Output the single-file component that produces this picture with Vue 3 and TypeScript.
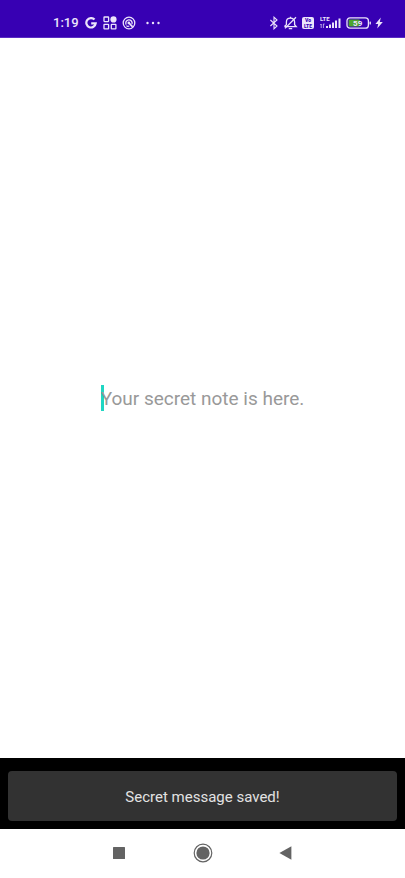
<script setup lang="ts">
import { ref } from 'vue'

const note = ref('')
const time = '1:19'
const battery = 59
const message = 'Secret message saved!'
</script>

<template>
  <div class="screen">
    <header class="status">
      <div class="group left">
        <span class="time">{{ time }}</span>
        <svg class="g" width="12" height="12" viewBox="0 0 12 12" aria-hidden="true">
          <path d="M9.5 2.6A4.7 4.7 0 1 0 10.7 6.4H6.2" fill="none" stroke="currentColor" stroke-width="2.2" />
        </svg>
        <svg class="apps" width="14" height="14" viewBox="0 0 14 14" aria-hidden="true">
          <g fill="none" stroke="currentColor" stroke-width="1.3">
            <rect x="1" y="1" width="4.6" height="4.6" rx=".5" />
            <rect x="1" y="8.3" width="4.6" height="4.6" rx=".5" />
            <rect x="8.3" y="8.3" width="4.6" height="4.6" rx=".5" />
          </g>
          <circle cx="10.5" cy="3.4" r="3.1" fill="currentColor" />
        </svg>
        <svg class="disc" width="14" height="14" viewBox="0 0 14 14" aria-hidden="true">
          <g fill="none" stroke="currentColor">
            <circle cx="7" cy="7" r="5.8" stroke-width="1.3" />
            <path d="M4.2 8.7A3.2 3.2 0 1 1 10 8" stroke-width="1.3" />
            <path d="M6.4 6.4L10.6 10.8" stroke-width="1.7" />
            <path d="M4.4 9.6C5.2 10.4 6.4 10.5 7.3 9.9" stroke-width="1.1" />
          </g>
          <circle cx="6.8" cy="6.9" r="1.3" fill="currentColor" />
        </svg>
        <svg class="more" width="14" height="4" viewBox="0 0 14 4" fill="currentColor" aria-hidden="true">
          <circle cx="1.5" cy="2" r="1.2" />
          <circle cx="7" cy="2" r="1.2" />
          <circle cx="12.5" cy="2" r="1.2" />
        </svg>
      </div>
      <div class="group right">
        <svg width="10" height="14" viewBox="0 0 10 14" aria-hidden="true">
          <path d="M1.4 4L8 10 5 12.8V1.2L8 4 1.4 10" fill="none" stroke="currentColor" stroke-width="1.1" />
        </svg>
        <svg width="15" height="14" viewBox="0 0 15 14" aria-hidden="true">
          <g fill="none" stroke="currentColor" stroke-width="1.3">
            <path d="M1.4 10.6H13.2L11.6 8.8V6C11.6 3.8 10 2.2 7.5 2.2S3.4 3.8 3.4 6V8.8L1.4 10.6" />
            <path d="M5.8 12.6H9.2M7.5 .8V2.2M2 12.4L13 1.2" />
          </g>
        </svg>
        <svg class="volte" width="12" height="12" viewBox="0 0 12 12" aria-hidden="true">
          <rect width="12" height="12" rx="2" fill="currentColor" />
          <text class="volte-text" x="6" y="5" text-anchor="middle">Vo</text>
          <text class="volte-text" x="6" y="11" text-anchor="middle">LTE</text>
        </svg>
        <svg class="signal" width="22" height="14" viewBox="0 0 22 14" aria-hidden="true">
          <text class="lte" x="0" y="5.4">LTE</text>
          <g fill="currentColor">
            <rect x="6" y="10" width="2" height="2" />
            <rect x="9" y="8.5" width="2" height="3.5" />
            <rect x="12" y="6.5" width="2" height="5.5" />
            <rect x="15" y="4.5" width="2" height="7.5" />
            <rect x="18.5" y="2.5" width="2" height="9.5" />
          </g>
          <path d="M1.2 12V8M.4 9L1.2 8M3.4 8V12M3.4 8H4.6" fill="none" stroke="currentColor" stroke-width=".7" />
        </svg>
        <svg class="battery" width="25" height="12" viewBox="0 0 25 12" aria-hidden="true">
          <rect x="2.6" y="2.4" :width="(19 * battery) / 100" height="7.2" rx="1" fill="#4ca52e" />
          <rect x="1" y=".8" width="21.4" height="10.4" rx="3" fill="none" stroke="currentColor" stroke-width="1.3" />
          <rect x="23.5" y="4.5" width="1.4" height="3" rx=".6" fill="currentColor" />
          <text class="level" x="11.7" y="8.9" text-anchor="middle">{{ battery }}</text>
        </svg>
        <svg class="bolt" width="8" height="12" viewBox="0 0 8 12" aria-hidden="true">
          <path d="M5.8 .6L.4 6.9H3.2L2.2 11.4 7.8 5H4.8Z" fill="currentColor" />
        </svg>
      </div>
    </header>

    <main class="content">
      <div class="field">
        <input v-model="note" class="note" type="text" aria-label="Secret note" placeholder="Your secret note is here." />
      </div>
    </main>

    <section class="snack-area">
      <div class="snackbar" role="status">{{ message }}</div>
    </section>

    <nav class="nav">
      <button type="button" aria-label="Recent apps">
        <svg width="20" height="20" viewBox="0 0 20 20"><rect x="4" y="4" width="12" height="12" rx=".5" fill="currentColor" /></svg>
      </button>
      <button type="button" aria-label="Home">
        <svg width="20" height="20" viewBox="0 0 20 20">
          <circle cx="10" cy="10" r="8.8" fill="none" stroke="currentColor" stroke-width="1.2" />
          <circle cx="10" cy="10" r="6.6" fill="currentColor" />
        </svg>
      </button>
      <button type="button" aria-label="Back">
        <svg width="20" height="20" viewBox="0 0 20 20"><path d="M2.4 10L14.4 3.2V16.8Z" fill="currentColor" /></svg>
      </button>
    </nav>
  </div>
</template>

<style>
body {
  margin: 0;
  background: #fff;
}
</style>

<style scoped>
.screen {
  display: flex;
  flex-direction: column;
  min-height: 100vh;
  font-family: Roboto, "Liberation Sans", sans-serif;
}
.status {
  display: flex;
  justify-content: space-between;
  align-items: center;
  box-sizing: border-box;
  height: 38px;
  padding: 9px 22px 0 53px;
  border-bottom: 1px solid #5a2cc4;
  background: #3700b3;
  color: #ece4fb;
}
.group {
  display: flex;
  align-items: center;
}
.left {
  gap: 6px;
}
.right {
  gap: 4px;
}
.signal {
  margin-left: 2px;
}
.time {
  font-size: 13px;
  line-height: 16px;
  font-weight: 500;
}
.disc {
  margin-left: -1px;
}
.more {
  margin-left: 4px;
}
.volte-text {
  font-size: 5px;
  font-weight: 900;
  fill: #3700b3;
}
.lte {
  font-size: 6px;
  font-weight: 700;
  fill: currentColor;
}
.level {
  font-size: 8px;
  font-weight: 700;
  fill: currentColor;
}
.content {
  flex: 1;
  display: flex;
  align-items: center;
  justify-content: center;
  background: #fff;
}
.field {
  position: relative;
  display: flex;
}
.field::before {
  content: "";
  position: absolute;
  top: 0;
  bottom: 0;
  left: 0;
  width: 3px;
  background: #1fd6c3;
}
.note {
  position: relative;
  field-sizing: content;
  box-sizing: border-box;
  max-width: 100%;
  height: 26px;
  padding: 1px 0 0;
  border: 0;
  outline: 0;
  background: transparent;
  color: #222;
  font: 400 19px/25px Roboto, "Liberation Sans", sans-serif;
}
.note::placeholder {
  color: #999;
  opacity: 1;
}
.snack-area {
  padding: 13px 8px 8px;
  background: #000;
}
.snackbar {
  padding: 16px 16px 14px;
  border-radius: 4px;
  background: #323232;
  color: #e2e2e2;
  font-size: 15px;
  line-height: 20px;
  text-align: center;
}
.nav {
  display: flex;
  justify-content: center;
  align-items: center;
  gap: 44px;
  box-sizing: border-box;
  height: 49px;
  padding-bottom: 1px;
  background: #fff;
}
.nav button {
  display: flex;
  justify-content: center;
  width: 40px;
  padding: 0;
  border: 0;
  background: none;
  color: #636363;
}
</style>
